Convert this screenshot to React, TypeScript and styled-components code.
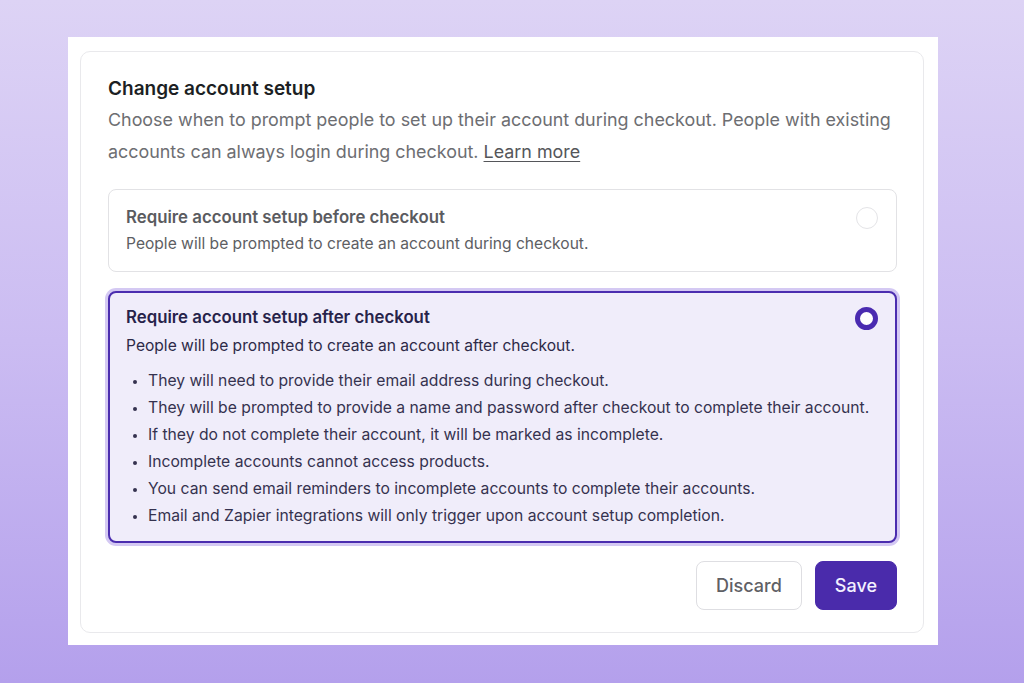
import React, { useState } from 'react';
import styled, { createGlobalStyle } from 'styled-components';

const GlobalStyle = createGlobalStyle`
  * { box-sizing: border-box; }
  html, body { margin: 0; padding: 0; }
  body {
    font-family: Inter, "Noto Sans", "Liberation Sans", sans-serif;
    -webkit-font-smoothing: antialiased;
  }
`;

const Page = styled.div`
  width: 1024px;
  height: 683px;
  overflow: hidden;
  background: linear-gradient(180deg, #ddd3f5 0%, #cbbcf2 50%, #b4a0ec 100%);
  padding: 37px 86px 38px 68px;
`;

const Frame = styled.div`
  width: 870px;
  height: 608px;
  background: #ffffff;
  padding: 14px 14px 12px 12px;
  display: flex;
`;

const Card = styled.section`
  flex: 1;
  border: 1px solid #e9e9ec;
  border-radius: 10px;
  padding: 24px 26px 22px 27px;
  display: flex;
  flex-direction: column;
`;

const Title = styled.h2`
  margin: 0;
  font-size: 19px;
  line-height: 26px;
  font-weight: 600;
  color: #1c1f24;
`;

const Intro = styled.p`
  margin: 2px 0 0;
  font-size: 17.9px;
  line-height: 32px;
  color: #6d6e72;
`;

const LearnMore = styled.a`
  color: #55565a;
  text-decoration: underline;
  text-underline-offset: 3px;
`;

const Options = styled.div`
  display: flex;
  flex-direction: column;
  gap: 19px;
  margin-top: 21px;
`;

const Option = styled.div<{ $selected?: boolean }>`
  position: relative;
  border-radius: 8px;
  cursor: pointer;
  border: ${(p) => (p.$selected ? '2px solid #4b2daf' : '1px solid #e2e2e5')};
  background: ${(p) => (p.$selected ? '#f0edfa' : '#ffffff')};
  box-shadow: ${(p) => (p.$selected ? '0 0 0 3px #d4c9f3' : 'none')};
  padding: ${(p) => (p.$selected ? '12px 18px 12px 16px' : '15px 18px 15px 17px')};
`;

const OptionTitle = styled.div<{ $selected?: boolean }>`
  font-size: 16.8px;
  line-height: 24px;
  font-weight: 600;
  color: ${(p) => (p.$selected ? '#27234a' : '#5a5b60')};
`;

const OptionText = styled.div<{ $selected?: boolean }>`
  margin-top: ${(p) => (p.$selected ? '5px' : '3px')};
  font-size: 15.6px;
  line-height: 24px;
  color: ${(p) => (p.$selected ? '#2d2a48' : '#5d5e63')};
`;

const Bullets = styled.ul`
  margin: 9px 0 0;
  padding: 0 0 0 22px;
  list-style: disc;
`;

const Bullet = styled.li`
  font-size: 15.7px;
  line-height: 27px;
  color: #35324f;

  &::marker {
    font-size: 12px;
  }
`;

const Radio = styled.span<{ $checked?: boolean }>`
  position: absolute;
  top: ${(p) => (p.$checked ? '14px' : '17px')};
  right: ${(p) => (p.$checked ? '17px' : '18px')};
  width: ${(p) => (p.$checked ? '23px' : '22px')};
  height: ${(p) => (p.$checked ? '23px' : '22px')};
  border-radius: 50%;
  background: #ffffff;
  border: ${(p) => (p.$checked ? '5.5px solid #4a2bb0' : '1.5px solid #e4e4e7')};
`;

const Actions = styled.div`
  display: flex;
  justify-content: flex-end;
  gap: 13px;
  margin-top: 18px;
`;

const Button = styled.button<{ $primary?: boolean }>`
  height: 49px;
  padding: 0 19px;
  border-radius: 8px;
  font-family: inherit;
  font-size: 18px;
  font-weight: 500;
  cursor: pointer;
  border: ${(p) => (p.$primary ? '1px solid #4a2bab' : '1.5px solid #dedee2')};
  background: ${(p) => (p.$primary ? '#4a2bab' : '#ffffff')};
  color: ${(p) => (p.$primary ? '#f3f0ff' : '#5f6065')};
`;

const bullets = [
  'They will need to provide their email address during checkout.',
  'They will be prompted to provide a name and password after checkout to complete their account.',
  'If they do not complete their account, it will be marked as incomplete.',
  'Incomplete accounts cannot access products.',
  'You can send email reminders to incomplete accounts to complete their accounts.',
  'Email and Zapier integrations will only trigger upon account setup completion.',
];

export default function App() {
  const [choice, setChoice] = useState<'before' | 'after'>('after');

  return (
    <>
      <GlobalStyle />
      <Page>
        <Frame>
          <Card>
            <Title>Change account setup</Title>
            <Intro>
              Choose when to prompt people to set up their account during checkout. People with existing
              accounts can always login during checkout. <LearnMore href="#">Learn more</LearnMore>
            </Intro>

            <Options>
              <Option $selected={choice === 'before'} onClick={() => setChoice('before')}>
                <OptionTitle $selected={choice === 'before'}>Require account setup before checkout</OptionTitle>
                <OptionText $selected={choice === 'before'}>
                  People will be prompted to create an account during checkout.
                </OptionText>
                <Radio $checked={choice === 'before'} />
              </Option>

              <Option $selected={choice === 'after'} onClick={() => setChoice('after')}>
                <OptionTitle $selected={choice === 'after'}>Require account setup after checkout</OptionTitle>
                <OptionText $selected={choice === 'after'}>
                  People will be prompted to create an account after checkout.
                </OptionText>
                <Bullets>
                  {bullets.map((b) => (
                    <Bullet key={b}>{b}</Bullet>
                  ))}
                </Bullets>
                <Radio $checked={choice === 'after'} />
              </Option>
            </Options>

            <Actions>
              <Button>Discard</Button>
              <Button $primary>Save</Button>
            </Actions>
          </Card>
        </Frame>
      </Page>
    </>
  );
}
